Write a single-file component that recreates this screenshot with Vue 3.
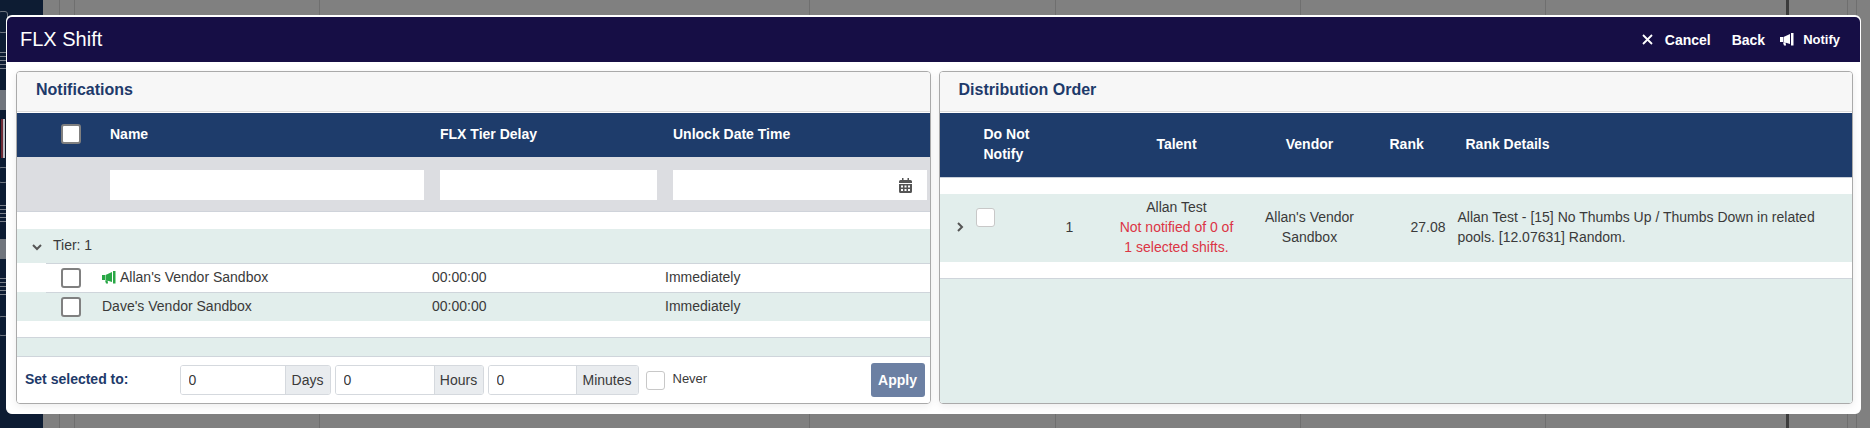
<script setup>
const leftColumns = ['Name', 'FLX Tier Delay', 'Unlock Date Time'];
const vendors = [
  { name: "Allan's Vendor Sandbox", notified: true, delay: '00:00:00', unlock: 'Immediately' },
  { name: "Dave's Vendor Sandbox", notified: false, delay: '00:00:00', unlock: 'Immediately' },
];
const delayFields = [
  { unit: 'Days', width: '151px', unitWidth: '45px' },
  { unit: 'Hours', width: '149px', unitWidth: '49px' },
  { unit: 'Minutes', width: '151px', unitWidth: '62px' },
];
// the lines of the grid behind the dimmed overlay
const backdropCols = ['17px', '15px', '245px', '490px', '246px', '245px', '245px', '243px', '59px', '9px'];
const sideItems = [
  { h: 11, kind: 'none' },
  { h: 22, kind: 'lock' },
  { h: 19, kind: 'none' },
  { h: 20, kind: 'lines' },
  { h: 18, kind: 'none' },
  { h: 20, kind: 'bar' },
  { h: 9, kind: 'none' },
  { h: 39, kind: 'box' },
  { h: 9, kind: 'none' },
  { h: 16, kind: 'lock' },
  { h: 22, kind: 'none' },
  { h: 18, kind: 'lines' },
  { h: 16, kind: 'none' },
  { h: 20, kind: 'bar' },
  { h: 19, kind: 'none' },
  { h: 17, kind: 'lines' },
  { h: 21, kind: 'none' },
  { h: 20, kind: 'lock' },
];
</script>

<template>
  <div class="page">
    <div class="backdrop">
      <div class="side">
        <div v-for="(item, i) in sideItems" :key="i" class="side-item" :class="'side-' + item.kind" :style="{ height: item.h + 'px' }"></div>
      </div>
      <div class="grid-lines">
        <div v-for="(w, i) in backdropCols" :key="i" class="grid-col" :style="{ width: w }"></div>
      </div>
    </div>

    <div class="modal">
      <header class="modal-head">
        <h1>FLX Shift</h1>
        <div class="actions">
          <button class="act act-cancel">
            <svg width="11" height="11" viewBox="0 0 11 11"><path d="M1 1l9 9M10 1l-9 9" stroke="#fff" stroke-width="1.8" fill="none" /></svg>
            <span>Cancel</span>
          </button>
          <button class="act act-back"><span>Back</span></button>
          <button class="act act-notify">
            <svg width="14" height="13" viewBox="0 0 14 13"><path d="M0 4h3v5H0zM3.500 4L10 1v10L3.500 9zM11 0h2.500v12.500H11zM3 9.500h2.500l.6 3H4z" fill="#fff" /></svg>
            <span>Notify</span>
          </button>
        </div>
      </header>

      <div class="modal-body">
        <section class="panel">
          <div class="panel-title">Notifications</div>
          <div class="left-head">
            <div class="check-cell"><input type="checkbox" class="box box-strong" /></div>
            <div v-for="col in leftColumns" :key="col">{{ col }}</div>
          </div>
          <div class="left-filter">
            <div></div>
            <div class="filter-cell"><input class="filter-input" /></div>
            <div class="filter-cell"><input class="filter-input" /></div>
            <div class="filter-cell last">
              <input class="filter-input" />
              <svg class="calendar" width="13" height="15" viewBox="0 0 13 15">
                <path fill="#555" d="M3 0h1.500v2h4V0H10v2h1.500A1.500 1.500 0 0 1 13 3.500V5H0V3.500A1.500 1.500 0 0 1 1.500 2H3zM0 6h13v7.500a1.500 1.500 0 0 1-1.500 1.500h-10A1.500 1.500 0 0 1 0 13.500z" />
                <path fill="#fff" d="M2 7.500h2v2H2zM5.500 7.500h2v2h-2zM9 7.500h2v2H9zM2 11h2v2H2zM5.500 11h2v2h-2zM9 11h2v2H9z" />
              </svg>
            </div>
          </div>
          <div class="left-body">
            <div class="tier">
              <svg width="10" height="7" viewBox="0 0 10 7"><path d="M1 1l4 4 4-4" stroke="#555" stroke-width="2" fill="none" /></svg>
              <span>Tier: 1</span>
            </div>
            <div v-for="(v, i) in vendors" :key="v.name" class="vendor" :class="{ odd: i % 2 === 1 }">
              <div class="vendor-cells">
                <div class="check-cell"><input type="checkbox" class="box box-strong" /></div>
                <div class="vendor-name">
                  <svg v-if="v.notified" width="14" height="13" viewBox="0 0 14 13"><path d="M0 4h3v5H0zM3.500 4L10 1v10L3.500 9zM11 0h2.500v12.500H11zM3 9.500h2.500l.6 3H4z" fill="#28a745" />
                  </svg>
                  {{ v.name }}
                </div>
                <div class="vendor-text">{{ v.delay }}</div>
                <div class="vendor-text">{{ v.unlock }}</div>
              </div>
            </div>
            <div class="left-gap"></div>
            <div class="left-pager"></div>
          </div>
          <div class="footer">
            <label class="footer-label">Set selected to:</label>
            <div v-for="f in delayFields" :key="f.unit" class="delay-group" :style="{ width: f.width }">
              <input class="delay-input" value="0" />
              <span class="delay-unit" :style="{ width: f.unitWidth }">{{ f.unit }}</span>
            </div>
            <input type="checkbox" class="box box-soft never-box" />
            <span class="never">Never</span>
            <button class="apply">Apply</button>
          </div>
        </section>

        <section class="panel">
          <div class="panel-title">Distribution Order</div>
          <div class="right-head">
            <div></div>
            <div class="no-notify">Do Not<br />Notify</div>
            <div></div>
            <div class="center">Talent</div>
            <div class="center">Vendor</div>
            <div class="rank-head">Rank</div>
            <div class="details-head">Rank Details</div>
          </div>
          <div class="right-body">
            <div class="right-gap"></div>
            <div class="right-row">
              <div class="chevron-cell">
                <svg width="7" height="10" viewBox="0 0 7 10"><path d="M1 1l4 4-4 4" stroke="#555" stroke-width="2" fill="none" /></svg>
              </div>
              <div class="row-check"><input type="checkbox" class="box box-soft" /></div>
              <div class="center">1</div>
              <div class="talent">
                Allan Test
                <div class="warn">Not notified of 0 of 1 selected shifts.</div>
              </div>
              <div class="vendor-cell">Allan's Vendor Sandbox</div>
              <div class="rank-value">27.08</div>
              <div class="details">Allan Test - [15] No Thumbs Up / Thumbs Down in related pools. [12.07631] Random.</div>
            </div>
            <div class="right-gap last"></div>
            <div class="right-rest"></div>
          </div>
        </section>
      </div>
    </div>
  </div>
</template>

<style scoped>
.page {
  position: relative;
  width: 1870px;
  height: 428px;
  overflow: hidden;
  font-family: "Liberation Sans", Arial, sans-serif;
  font-size: 14px;
  color: #3a3a3a;
}

.backdrop {
  display: flex;
  height: 100%;
  background: #808080;
}
.side {
  width: 43px;
  background: #0d1c33;
  display: flex;
  flex-direction: column;
  flex-shrink: 0;
}
.side-item {
  flex-shrink: 0;
  box-sizing: border-box;
}
.side-lock {
  width: 10px;
  margin-left: -2px;
  border: 1px solid #6e7580;
  border-radius: 3px;
}
.side-lines {
  background: repeating-linear-gradient(#7a808a 0 1px, transparent 1px 4px);
}
.side-bar {
  background: #70757d;
}
.side-box {
  background: linear-gradient(90deg, #0a1424 0 1px, #6d2a35 1px 3px, #b7bbc2 3px 5px, #0a1424 5px);
}
.grid-lines {
  display: flex;
}
.grid-col {
  box-sizing: border-box;
  height: 100%;
  border-right: 1px solid #6f6f6f;
}
.grid-col:nth-child(8) {
  border-right: 3px solid #3c3c3c;
}

.modal {
  position: absolute;
  left: 6px;
  top: 15px;
  width: 1855px;
  height: 399px;
  box-sizing: border-box;
  background: #fff;
  border: 1px solid #fff;
  border-top-width: 2px;
  border-radius: 6px;
  display: flex;
  flex-direction: column;
}
.modal-head {
  height: 45px;
  flex-shrink: 0;
  background: #160e45;
  border-radius: 5px 5px 0 0;
  display: flex;
  align-items: center;
  justify-content: space-between;
  color: #fff;
}
.modal-head h1 {
  margin: 0 0 0 13px;
  font-size: 20px;
  font-weight: 400;
}
.actions {
  display: flex;
  align-items: center;
  margin-right: 20px;
}
.act {
  display: flex;
  align-items: center;
  padding: 0;
  background: none;
  border: none;
  color: #fff;
  font: 700 14px "Liberation Sans", Arial, sans-serif;
}
.act-cancel svg {
  margin: -1px 12px 0 0;
}
.act-back {
  margin-left: 21px;
}
.act-notify {
  margin-left: 15px;
  font-size: 13px;
}
.act-notify svg {
  margin-right: 9px;
}

.modal-body {
  flex: 1;
  display: flex;
  gap: 8px;
  padding: 9px 7px 9px 9px;
  min-height: 0;
}
.panel {
  flex: 1;
  min-width: 0;
  box-sizing: border-box;
  border: 1px solid #aaaaaa;
  border-radius: 4px;
  display: flex;
  flex-direction: column;
  overflow: hidden;
  box-shadow: 0 2px 8px rgba(0, 0, 0, 0.08);
}
.panel-title {
  height: 40px;
  flex-shrink: 0;
  box-sizing: border-box;
  padding: 8px 0 0 19px;
  background: #f7f7f7;
  border-bottom: 1px solid #dcdcdc;
  color: #1e3a6a;
  font-size: 16px;
  font-weight: 700;
  line-height: 20px;
}

.left-head,
.left-filter {
  display: grid;
  grid-template-columns: 93px 330px 233px 1fr;
}
.left-head {
  height: 44px;
  flex-shrink: 0;
  box-sizing: border-box;
  margin-top: 1px;
  padding-bottom: 2px;
  align-items: center;
  background: #1e3c6b;
  color: #fff;
  font-weight: 700;
}
.check-cell {
  display: flex;
  padding-left: 44px;
}
.box {
  appearance: none;
  margin: 0;
  width: 20px;
  height: 20px;
  box-sizing: border-box;
  background: #fff;
  flex-shrink: 0;
}
.box-strong {
  border: 2px solid #808080;
  border-radius: 3px;
}
.box-soft {
  width: 19px;
  height: 19px;
  border: 1px solid #c8c8c8;
  border-radius: 3px;
}
.left-filter {
  height: 55px;
  flex-shrink: 0;
  box-sizing: border-box;
  padding-top: 13px;
  background: #dcdde1;
  border-bottom: 1px solid #cfd3da;
}
.filter-cell {
  position: relative;
  padding-right: 16px;
}
.filter-cell.last {
  padding-right: 3px;
}
.filter-input {
  display: block;
  width: 100%;
  height: 30px;
  box-sizing: border-box;
  border: none;
  background: #fff;
}
.calendar {
  position: absolute;
  right: 18px;
  top: 8px;
}

.left-body {
  flex: 1;
  padding-top: 17px;
  display: flex;
  flex-direction: column;
  background: #fff;
}
.tier {
  height: 34px;
  flex-shrink: 0;
  box-sizing: border-box;
  display: flex;
  align-items: center;
  background: #e2eeec;
  padding: 0 0 2px 15px;
}
.tier svg {
  margin: 5px 11px 0 0;
}
.vendor {
  height: 29px;
  flex-shrink: 0;
  padding-left: 29px;
  background: #fff;
}
.vendor.odd {
  background: #e2eeec;
}
.vendor-cells {
  height: 100%;
  box-sizing: border-box;
  display: grid;
  grid-template-columns: 56px 330px 233px 1fr;
  align-items: center;
  border-top: 1px solid #cfd5db;
}
.vendor-cells .check-cell {
  padding-left: 15px;
}
.vendor-name {
  display: flex;
  align-items: center;
  gap: 4px;
  padding-bottom: 2px;
}
.vendor-text {
  padding-bottom: 2px;
}
.left-gap {
  height: 16px;
  flex-shrink: 0;
  border-bottom: 1px solid #cfd5db;
}
.left-pager {
  flex: 1;
  background: #e2eeec;
  border-bottom: 1px solid #cfd5db;
}

.footer {
  height: 46px;
  flex-shrink: 0;
  box-sizing: border-box;
  display: flex;
  align-items: center;
  padding-left: 8px;
  background: #fff;
}
.footer-label {
  width: 154.5px;
  flex-shrink: 0;
  padding-bottom: 2px;
  color: #1e3a6a;
  font-weight: 700;
}
.delay-group {
  display: flex;
  height: 30px;
  margin-right: 4px;
  box-sizing: border-box;
  border: 1px solid #d5d9de;
  border-radius: 3px;
  overflow: hidden;
  flex-shrink: 0;
}
.delay-input {
  flex: 1;
  min-width: 0;
  box-sizing: border-box;
  padding: 0 0 0 8px;
  border: none;
  background: #fff;
  color: #3a3a3a;
  font: 14px "Liberation Sans", Arial, sans-serif;
}
.delay-unit {
  box-sizing: border-box;
  display: flex;
  align-items: center;
  justify-content: center;
  background: #e9ecef;
  border-left: 1px solid #d5d9de;
  font-size: 14px;
  flex-shrink: 0;
}
.never-box {
  margin-left: 3px;
}
.never {
  margin: -3px 0 0 8px;
  font-size: 13px;
}
.apply {
  margin-left: auto;
  margin-right: 5px;
  width: 54px;
  height: 34px;
  background: #6c80a3;
  border: none;
  border-radius: 3px;
  color: #fff;
  font: 700 14px "Liberation Sans", Arial, sans-serif;
}

.right-head,
.right-row {
  display: grid;
  grid-template-columns: 36px 71px 46px 168px 98px 91px 1fr;
}
.right-head {
  height: 65px;
  flex-shrink: 0;
  box-sizing: border-box;
  margin-top: 1px;
  padding-bottom: 2px;
  align-items: center;
  background: #1e3c6b;
  border-bottom: 1px solid #c9d0da;
  color: #fff;
  font-weight: 700;
  line-height: 20px;
}
.no-notify {
  padding-left: 8px;
}
.center {
  text-align: center;
}
.chevron-cell {
  text-align: center;
  padding-left: 5px;
}
.rank-head {
  padding-left: 31px;
}
.details-head {
  padding-left: 16px;
}
.right-body {
  flex: 1;
  display: flex;
  flex-direction: column;
  background: #fff;
}
.right-gap {
  height: 16px;
  flex-shrink: 0;
}
.right-gap.last {
  height: 16px;
  border-bottom: 1px solid #cfd5db;
}
.right-row {
  height: 68px;
  flex-shrink: 0;
  box-sizing: border-box;
  padding-bottom: 2px;
  align-items: center;
  background: #e2eeec;
  line-height: 20px;
}
.row-check {
  align-self: start;
  padding-top: 14px;
}
.talent,
.vendor-cell {
  text-align: center;
}
.warn {
  padding: 0 22px;
  color: #dc3545;
}
.vendor-cell {
  padding: 0 1px;
}
.rank-value {
  text-align: right;
  padding-right: 4px;
}
.details {
  padding: 0 30px 0 8px;
}
.right-rest {
  flex: 1;
  background: #e2eeec;
}
</style>
